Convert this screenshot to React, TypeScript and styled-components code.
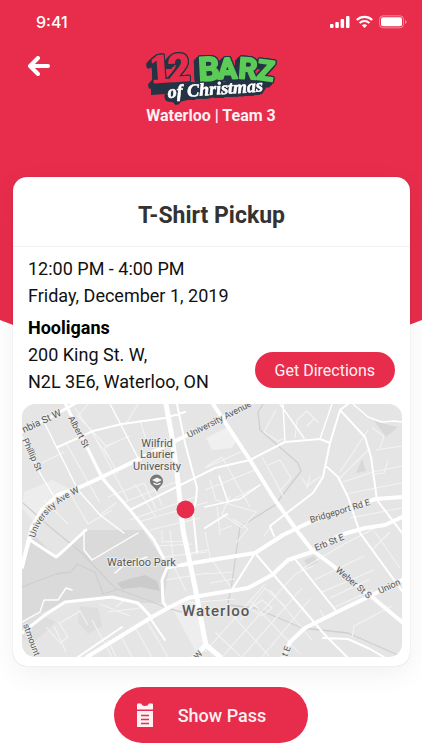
import React from 'react';
import styled, { createGlobalStyle } from 'styled-components';

const RED = '#e72d4b';
const NAVY = '#243444';
const GREEN = '#5ccb57';

const GlobalStyle = createGlobalStyle`
  *, *::before, *::after { box-sizing: border-box; }
  body {
    margin: 0;
    background: #ffffff;
    font-family: Roboto, 'Liberation Sans', sans-serif;
    color: #111111;
  }
  h1, h2, p { margin: 0; }
  button { font-family: inherit; border: 0; cursor: pointer; }
`;

const Page = styled.div`
  display: grid;
  grid-template-columns: minmax(0, 1fr);
  min-height: 100vh;
  align-items: start;
`;

const Backdrop = styled.div`
  grid-area: 1 / 1;
  height: 400px;
  background: ${RED};
  clip-path: polygon(0 0, 100% 0, 100% 80%, 50% 100%, 0 80%);
`;

const Screen = styled.div`
  grid-area: 1 / 1;
  z-index: 1;
  display: flex;
  flex-direction: column;
`;

const StatusBar = styled.div`
  display: flex;
  align-items: center;
  justify-content: space-between;
  height: 44px;
  padding: 0 15px 0 36px;
  color: #ffffff;
`;

const Clock = styled.span`
  font-family: Inter, Roboto, sans-serif;
  font-size: 16px;
  font-weight: 500;
`;

const StatusIcons = styled.div`
  display: flex;
  align-items: center;
  gap: 6px;
  svg { display: block; }
`;

const NavBar = styled.header`
  display: grid;
  grid-template-columns: 44px 1fr 44px;
  padding: 0 17px;
  color: #ffffff;
`;

const BackButton = styled.button`
  display: grid;
  place-items: center;
  width: 44px;
  height: 44px;
  padding: 0;
  background: transparent;
  color: inherit;
`;

const Brand = styled.div`
  display: flex;
  flex-direction: column;
  align-items: center;
  svg { display: block; overflow: visible; }
`;

const Team = styled.p`
  font-size: 16px;
  line-height: 20px;
  font-weight: 700;
  color: #fff1f3;
`;

const Card = styled.main`
  margin: 51px 12px 0 13px;
  background: #ffffff;
  border-radius: 14px;
  box-shadow: 0 0 1px rgba(0, 0, 40, 0.25), 0 8px 28px rgba(0, 0, 0, 0.06);
`;

const CardTitle = styled.h1`
  padding: 26px 16px 17px;
  border-bottom: 1px solid #f2f2f2;
  font-size: 23px;
  line-height: 26px;
  font-weight: 700;
  text-align: center;
  color: #333333;
`;

const Details = styled.div`
  display: flex;
  flex-direction: column;
  gap: 5px;
  padding: 8px 15px 9px;
  font-size: 18px;
  line-height: 27px;
`;

const PlaceRow = styled.div`
  display: flex;
  align-items: flex-end;
  justify-content: space-between;
`;

const PlaceName = styled.h2`
  font-size: 18px;
  line-height: 27px;
  font-weight: 700;
  color: #000000;
`;

const Address = styled.address`
  font-style: normal;
`;

const Pill = styled.button<{ $large?: boolean }>`
  display: inline-flex;
  align-items: center;
  justify-content: center;
  gap: ${({ $large }) => ($large ? '24px' : '0')};
  height: ${({ $large }) => ($large ? '56px' : '36px')};
  padding: ${({ $large }) => ($large ? '0 42px 0 22px' : '0 20px')};
  margin-bottom: ${({ $large }) => ($large ? '0' : '7px')};
  border-radius: 28px;
  background: ${RED};
  color: #fff1f3;
  font-size: ${({ $large }) => ($large ? '18px' : '16px')};
  font-weight: ${({ $large }) => ($large ? 500 : 400)};
  white-space: nowrap;
`;

const MapFrame = styled.div`
  margin: 0 8px 0 9px;
  padding-bottom: 9px;
  svg {
    display: block;
    width: 100%;
    height: auto;
    border-radius: 13px;
  }
`;

const Footer = styled.footer`
  display: flex;
  justify-content: center;
  padding: 21px 0 7px;
`;

const Road = styled.path<{ $w: number }>`
  fill: none;
  stroke: #ffffff;
  stroke-width: ${({ $w }) => $w};
  stroke-linejoin: round;
  stroke-linecap: round;
`;

const MinorRoads = styled.path`
  fill: none;
  stroke: #f3f3f3;
  stroke-width: 1.1;
  stroke-linejoin: round;
`;

const Creek = styled.path`
  fill: none;
  stroke: #cfcfcf;
  stroke-width: 1.3;
  stroke-linejoin: round;
`;

const Label = styled.text<{ $size?: number; $weight?: number }>`
  font-family: Roboto, sans-serif;
  font-size: ${({ $size }) => $size ?? 9}px;
  font-weight: ${({ $weight }) => $weight ?? 400};
  fill: #585858;
  stroke: #ececec;
  stroke-width: 2px;
  paint-order: stroke;
`;

const Extruded = styled.g<{ $depth: number }>`
  stroke-linejoin: round;
  filter: drop-shadow(1px 0 0 ${NAVY}) drop-shadow(-1px 0 0 ${NAVY})
    drop-shadow(0 1px 0 ${NAVY}) drop-shadow(0 -1px 0 ${NAVY})
    drop-shadow(${({ $depth }) => `-${$depth}px ${$depth}px`} 0 ${NAVY})
    drop-shadow(${({ $depth }) => `-${$depth}px ${$depth}px`} 0 ${NAVY});
`;

const Lettering = styled.text<{ $size: number; $face?: string }>`
  font-family: ${({ $face }) => $face ?? 'Roboto, sans-serif'};
  font-size: ${({ $size }) => $size}px;
  font-weight: 700;
`;

const Logo = () => (
  <svg width="132" height="62" viewBox="146 44 132 62" role="img" aria-label="12 Barz of Christmas">
    <path d="M152 82h41l9 1 66-4 1 6-6 9-70 5-17 4-7-2-2-7-15 1z" fill={NAVY} />
    <Extruded $depth={2} fill={RED} stroke={RED} strokeWidth="1.500">
      <Lettering $size={36} $face="'DejaVu Serif Condensed', 'DejaVu Serif', serif" transform="translate(151 83) rotate(-4)">1</Lettering>
      <Lettering $size={38} transform="translate(170 82) rotate(-4)">2</Lettering>
    </Extruded>
    <Extruded $depth={2} fill={GREEN} stroke={GREEN} strokeWidth="2">
      <Lettering $size={33} transform="translate(200 81) rotate(-3)">B</Lettering>
      <Lettering $size={29} transform="translate(219 79) rotate(-2)">A</Lettering>
      <Lettering $size={29} transform="translate(239 78) rotate(4)">R</Lettering>
      <Lettering $size={28} transform="translate(257 79) rotate(8)">Z</Lettering>
    </Extruded>
    <Extruded $depth={1} fill="#ffffff" stroke="#ffffff" strokeWidth=".6">
      <Lettering $size={18} $face="'Liberation Serif', serif" fontStyle="italic" transform="translate(169 98) rotate(-4)">of Christmas</Lettering>
    </Extruded>
  </svg>
);

const CityMap = () => (
  <svg viewBox="22 404 380 253" role="img" aria-label="Map of Waterloo">
    <rect x="22" y="404" width="380" height="253" fill="#e5e5e5" />
    <path d="M22 585L22 567 34 535 56 557 84 530 143 530 169 569 163 603 138 603 112 597 65 602 22 622z" fill="#dadada" />
    <path d="M24 492l28-12 20 10-24 12-14 20-12-14z" fill="#ededed" />
    <path d="M206 438l24-12 8 12-6 10-20 2z" fill="#f0f0f0" />
    <path d="M172 608l16-8 10 4 6 42-8 6z" fill="#eeeeee" />
    <path d="M117 583l12-4 16-4 12 6 3 10-20-4-18 2z" fill="#cbcbcb" />
    <path d="M80 606l18 2 4 18-14 8-10-12zM22 620l14-8 20 10-24 22-10-6z" fill="#dedede" />
    <path d="M374 421l24 6-12 10zM356 473l6-14 4 12zM304 560l10-4 4 6-10 5z" fill="#d8d8d8" />

    <Creek d="M263 404l-5 8 2 18 38 33 3 8-26 34-35 22-3 20-6 42-3 14" />
    <Creek d="M23 503l27 24 32 26 33 35 53 20 14 4M22 587l34-13 15-2 6-8 18 8 8 22 16-5M228 605l27 3 47 20 46 5 50 22" />

    <MinorRoads d="M88 404l-10 12 28 30 24-10M75 408l34 50M66 443l34 60M80 437l30 50M92 432l36 68M120 440l-16 8 14 26M140 420l8 26 24-8M138 404l-12 20M108 497l36-14 12 26M122 503l56-22M130 520l68-24M138 522l70-20M150 530l50-12M135 484l20 32M150 479l12 26M42 463l22-11M68 490l20 34 24-14M100 515l16-12M44 500l24 24" />
    <MinorRoads d="M205 468l40-18M250 507l-28-50-15 9M262 457l22 40M268 465l12-5 11 18-12 14M276 410l-12 22 14 9 7-3M295 438l2-18 10-9 12 12M307 426l8-8M368 430l-28 42M343 482l30-10 29-6M345 494l57-11M370 448l-32 32M376 450l26-4M372 428l12 8-4 12M388 461l-4 12-9 1" />
    <MinorRoads d="M219 476l9 26 32-17M210 480l6 20 40 12-14 16-20-14 8-18M217 507l3 28M233 519l15 10-12 14M205 490l50-20M270 528l-6 8M350 518l52-10M347 506l55-10M302 478l5 8 14-10M307 488l3-12" />
    <MinorRoads d="M162 530v12l25-1M170 530l4 36M158 546l34-2M163 557l44-5M166 580l42-7M190 553l18-3M185 603l50-4M172 563l14 28M205 532l5 25 22 32M207 574l26-2M210 583l24-4M220 530l12-4M240 620l25-32 20 18M205 652l60-68M222 657l73-83 18-8M242 657l60-69M262 657l48-58M215 632l26 25M228 610l42 47M250 600l50 54M270 590l42 50M248 610l14-10 10 8-10 8-10-6" />
    <MinorRoads d="M300 570l46-27 37-19M322 592l52-22M314 580l50-24M330 598l40-19M335 607l38-17M375 532l25 36M390 532l-18 18M352 638l2-12 38-20M320 610l6 10M54 626l12 26M92 620l20 37M60 623l20-12 8 14M46 627l14 16 8-6-10-16M108 640l8 17M120 634l12 23M134 626l18 31M146 620l22 37M100 604l30 12M116 607l10-8 18 8M108 612l32-4" />
    <Road $w={1.4} d="M22 622l18-10 4-12 14 0 8-12 6 2M115 573l8-7 24-9M84 530v20l8 10 22-13 24-14M43 420l35 70 22 25 24 18M22 437l18 36 13 22M110 404l12 23 16 31M283 404l2 38M332 404l-12 35M280 404l24 34M353 404l15 13 14 5 12-1 8 1M205 507l35-8 20-14M219 476l9 26" />
    <Road $w={2} d="M58 447l35-16 29-7 43-6 20-6M177 404l8 39 12 45-1 12-3 12 4 40M130 510l85-42 35-8 35-18 35-3 10 4M340 410l-10 33-7 34-10 16-25 19-18 14 4 10M348 404l-8 6 25 27 6 20 6 43 25 33M327 467l11 10 10 20 12 36 42 58M255 553l-22 35M255 553l70 82 22 22M295 559l42 53M323 638l25 1 22 10 14 8M78 657l44-30M150 618l15 22M205 528l22-14" />
    <Road $w={3} d="M65 403l22 44 15 31 28 32 24 30 10 19M22 432l36-19 18-10M22 633l23-18 20-13 47-5 26 6 14 15M30 540l26 17 5-4 25-23M167 608l-4-6-1-22 5-12 15-3" />
    <Road $w={4} d="M22 567l10-40 10-17 16-15 20-7 24-11 35-17 36-18 42-20 33-17M213 404l37 56 25 40 23 32 14 18 20 15 40 32 30 25M402 497l-27 2-37 14-30 10-25 12-28 18-50 8-23 4M402 517l-17 8-20 3-25 7-28 17-24 8-16 15-24 13-43 7-17 3-20 10-16 9-65 40M402 580l-30 15-35 17-32 16-15 14-7 15" />
    <Road $w={5} d="M166 404l6 33 5 36 6 57 12 57 8 43 3 15 14 12M206 645l-12 12" />

    <Label $size={10} transform="translate(24 433) rotate(-25)">nbia St W</Label>
    <Label transform="translate(68 418) rotate(62)">Albert St</Label>
    <Label transform="translate(22 440) rotate(65)">Phillip St</Label>
    <path id="university-ave" d="M35 538Q42 508 84 490" fill="none" />
    <Label><textPath href="#university-ave">University Ave W</textPath></Label>
    <Label transform="translate(189 438) rotate(-27)">University Avenue</Label>
    <Label transform="translate(311 523) rotate(-17)">Bridgeport Rd E</Label>
    <Label transform="translate(316 551) rotate(-22)">Erb St E</Label>
    <Label transform="translate(335 571) rotate(40)">Weber St S</Label>
    <Label transform="translate(380 594) rotate(-25)">Union</Label>
    <Label transform="translate(23 625) rotate(70)">stmount</Label>
    <Label transform="translate(287 657) rotate(-68)">t E</Label>
    <Label transform="translate(198 660) rotate(-50)">W</Label>
    <Label $size={11} textAnchor="middle">
      <tspan x="157" y="447">Wilfrid</tspan>
      <tspan x="157" y="458">Laurier</tspan>
      <tspan x="157" y="470">University</tspan>
    </Label>
    <Label $size={11} x="107" y="566">Waterloo Park</Label>
    <Label $size={15} $weight={500} x="182" y="616" letterSpacing="1">Waterloo</Label>

    <path d="M157 492c-1-5-7-6-7-11a6.5 6.5 0 0 1 13 0c0 5-5 6-6 11z" fill="#777777" />
    <path d="M152 480l5-2.500 5 2.500-5 2.500zM153.500 482.500v1.500c2 1.500 5 1.500 7 0v-1.500l-3.500 1.500z" fill="#f3f3f3" />
    <circle cx="185.500" cy="509.500" r="9" fill={RED} />
  </svg>
);

const Signal = () => (
  <svg width="20" height="14" viewBox="0 0 20 14" fill="#ffffff" aria-hidden="true">
    <rect x="0" y="9" width="3.500" height="4" rx="1" />
    <rect x="5.300" y="7" width="3.500" height="6" rx="1" />
    <rect x="10.600" y="4" width="3.500" height="9" rx="1" />
    <rect x="16" y="1" width="3.500" height="12" rx="1" />
  </svg>
);

const Wifi = () => (
  <svg width="17" height="14" viewBox="0 0 17 14" fill="none" stroke="#ffffff" strokeWidth="2.200" aria-hidden="true">
    <path d="M.8 5C5 .8 12 .8 16.200 5M3.600 8c2.800-2.700 7-2.700 9.800 0" />
    <path d="M8.500 13L5.800 10.300c1.500-1.400 3.900-1.400 5.400 0z" fill="#ffffff" stroke="none" />
  </svg>
);

const Battery = () => (
  <svg width="28" height="14" viewBox="0 0 28 14" aria-hidden="true">
    <rect x=".5" y=".8" width="24" height="12" rx="3.500" fill="none" stroke="#ffffff" strokeOpacity=".45" />
    <rect x="2" y="2.300" width="21" height="9" rx="2" fill="#ffffff" />
    <path d="M26 5v4c2-.8 2-3.200 0-4z" fill="#ffffff" fillOpacity=".5" />
  </svg>
);

const BackArrow = () => (
  <svg width="24" height="20" viewBox="0 0 24 20" fill="none" stroke="#ffffff" strokeWidth="4" strokeLinecap="round" strokeLinejoin="round" aria-hidden="true">
    <path d="M11 2L3 10l8 8M4 10h17" />
  </svg>
);

const PassIcon = () => (
  <svg width="18" height="24" viewBox="0 0 18 24" aria-hidden="true">
    <path d="M1 6.500V1.500Q1 .5 2 .5h3q1 2.500 4 2.500t4-2.500h3q1 0 1 1v5z" fill="#fff1f3" />
    <path d="M1 8h16v16H1z" fill="#fff1f3" />
    <path d="M5 12.500h8M5 16.500h8M5 20.500h8" stroke={RED} strokeWidth="1.400" />
  </svg>
);

export default function App() {
  return (
    <>
      <GlobalStyle />
      <Page>
        <Backdrop />
        <Screen>
          <StatusBar>
            <Clock>9:41</Clock>
            <StatusIcons>
              <Signal />
              <Wifi />
              <Battery />
            </StatusIcons>
          </StatusBar>
          <NavBar>
            <BackButton aria-label="Back">
              <BackArrow />
            </BackButton>
            <Brand>
              <Logo />
              <Team>Waterloo | Team 3</Team>
            </Brand>
          </NavBar>
          <Card>
            <CardTitle>T-Shirt Pickup</CardTitle>
            <Details>
              <div>
                <p>12:00 PM - 4:00 PM</p>
                <p>Friday, December 1, 2019</p>
              </div>
              <PlaceRow>
                <div>
                  <PlaceName>Hooligans</PlaceName>
                  <Address>
                    200 King St. W,
                    <br />
                    N2L 3E6, Waterloo, ON
                  </Address>
                </div>
                <Pill type="button">Get Directions</Pill>
              </PlaceRow>
            </Details>
            <MapFrame>
              <CityMap />
            </MapFrame>
          </Card>
          <Footer>
            <Pill type="button" $large>
              <PassIcon />
              Show Pass
            </Pill>
          </Footer>
        </Screen>
      </Page>
    </>
  );
}
